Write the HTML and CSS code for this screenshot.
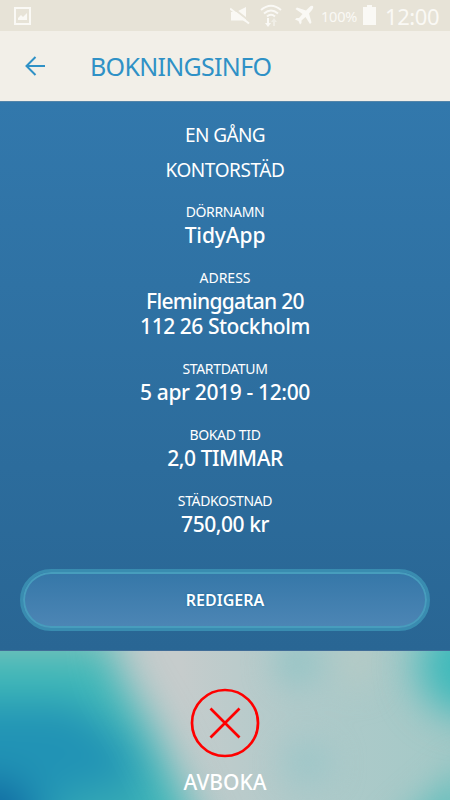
FILE: index.html
```
<!DOCTYPE html>
<html lang="sv">
<head>
<meta charset="utf-8">
<title>Bokningsinfo</title>
<link rel="stylesheet" href="styles.css">
</head>
<body>

<div class="statusbar">
    <svg class="icon-picture" width="18" height="19" viewBox="0 0 18 19">
        <path d="M1 1h15v16H1z" fill="none" stroke="currentColor" stroke-width="2"/>
        <path d="M4 13v-2l3-3 2 2 4-4v7z" fill="currentColor"/>
    </svg>
    <svg class="icon-mute" width="20" height="20" viewBox="0 0 20 20">
        <path d="M1 6h5l10-5v15l-3-1.500H1z" fill="currentColor"/>
        <path d="M1 .5l19 15" stroke="#e7e3d7" stroke-width="2"/>
        <path d="M0 2.500l19 15" stroke="currentColor" stroke-width="2"/>
    </svg>
    <svg class="icon-wifi" width="22" height="23" viewBox="0 0 22 23">
        <g fill="none" stroke="currentColor" stroke-width="2">
            <path d="M1 6q10-8.500 20 0M4 9.500q7-6 14 0M7 12.500q4-3.500 8 0"/>
        </g>
        <path d="M7 14h2v5h2l-3 4-3-4h2z" fill="currentColor"/>
        <path d="M13 22h2v-4h2l-3-4-3 4h2z" fill="currentColor" opacity=".5"/>
    </svg>
    <svg class="icon-plane" width="19" height="20" viewBox="0 0 19 20">
        <path d="M18 1q-1.500-1-3.500 1L11 5.500 2 2.500.5 4l7 5L4 13H1.500L0 14.500l3.500 1.500L5 19.500 6.500 18v-2.500l4-3.500 4.500 7 1.500-1.500-2.500-9L17 5q2-2.500 1-4z" fill="currentColor"/>
    </svg>
    <span class="percent">100%</span>
    <svg class="icon-battery" width="13" height="20" viewBox="0 0 13 20">
        <path d="M4 0h5v2h4v18H0V2h4z" fill="currentColor"/>
    </svg>
    <span class="clock">12:00</span>
</div>

<div class="header">
    <svg class="back" width="20" height="20" viewBox="0 0 20 20">
        <path d="M20 10H2M10.500 1L1.500 10l9 9" fill="none" stroke="currentColor" stroke-width="2"/>
    </svg>
    <h1 class="title">BOKNINGSINFO</h1>
</div>

<div class="panel">
    <div class="service once">EN GÅNG</div>
    <div class="service">KONTORSTÄD</div>

    <div class="info">
        <div class="label">DÖRRNAMN</div>
        <div class="value name">TidyApp</div>
    </div>
    <div class="info">
        <div class="label adress">ADRESS</div>
        <div class="value street">Fleminggatan 20</div>
        <div class="value">112 26 Stockholm</div>
    </div>
    <div class="info">
        <div class="label">STARTDATUM</div>
        <div class="value date">5 apr 2019 - 12:00</div>
    </div>
    <div class="info">
        <div class="label">BOKAD TID</div>
        <div class="value">2,0 TIMMAR</div>
    </div>
    <div class="info">
        <div class="label">STÄDKOSTNAD</div>
        <div class="value">750,00 kr</div>
    </div>

    <button class="edit">REDIGERA</button>
</div>

<div class="footer">
    <svg class="backdrop" width="450" height="149" viewBox="0 0 450 149">
        <defs>
            <linearGradient id="base">
                <stop offset=".4" stop-color="#c6cccc"/>
                <stop offset=".65" stop-color="#b0caca"/>
                <stop offset="1" stop-color="#a4c9c7"/>
            </linearGradient>
            <filter id="soft" x="-50%" y="-50%" width="200%" height="200%" color-interpolation-filters="sRGB">
                <feGaussianBlur stdDeviation="20"/>
            </filter>
            <filter id="faint" x="-50%" y="-50%" width="200%" height="200%" color-interpolation-filters="sRGB">
                <feGaussianBlur stdDeviation="16"/>
            </filter>
        </defs>
        <path d="M0 0h450v149H0z" fill="url(#base)"/>
        <g filter="url(#faint)">
            <ellipse cx="298" cy="12" rx="22" ry="22" fill="#94c4c5"/>
            <ellipse cx="308" cy="112" rx="24" ry="20" fill="#9cc6c8"/>
            <ellipse cx="358" cy="0" rx="16" ry="40" fill="#b6cac5"/>
            <path d="M390 180l80-70v90z" fill="#68bfbd"/>
        </g>
        <g filter="url(#soft)">
            <path d="M-80-80H100L118 20l36 60 66 140H-80z" fill="#3fb8b8"/>
            <path d="M-80-80H125L108 0H-80z" fill="#88c3bb"/>
            <path d="M-80 52L75 52l48 36 20 40-5 90H-80z" fill="#2193b5"/>
            <path d="M50 220l10-75 75-15 30 90z" fill="#36aab5"/>
            <ellipse cx="-8" cy="164" rx="38" ry="34" fill="#0f68a0"/>
            <ellipse cx="470" cy="15" rx="52" ry="50" fill="#3cb9ba"/>
        </g>
    </svg>
    <svg class="cancel-icon" width="70" height="70" viewBox="0 0 70 70">
        <circle cx="35" cy="35" r="33" fill="none" stroke="#f00" stroke-width="2.700"/>
        <path d="M20.500 20.500l29 29M49.500 20.500l-29 29" stroke="#f00" stroke-width="2.700"/>
    </svg>
    <div class="cancel">AVBOKA</div>
</div>

</body>
</html>
```
FILE: styles.css
```
* {
    box-sizing: border-box;
}
body {
    margin: 0;
    width: 450px;
    height: 800px;
    overflow: hidden;
    display: flex;
    flex-direction: column;
    font-family: "Noto Sans", sans-serif;
    color: #fff;
}
.statusbar {
    height: 31px;
    flex: none;
    display: flex;
    align-items: flex-start;
    padding: 5px 0 0 14px;
    background: #e7e3d7;
    color: #faf9f5;
}
.icon-picture {
    margin-top: 2px;
    margin-right: 198px;
}
.icon-mute {
    margin-top: 1px;
    margin-right: 10px;
}
.icon-wifi {
    margin-top: -1px;
    margin-right: 13px;
}
.icon-plane {
    margin-right: 7px;
}
.percent {
    width: 42px;
    font-size: 14.5px;
    line-height: 22px;
    letter-spacing: -0.2px;
}
.icon-battery {
    margin-right: 9px;
}
.clock {
    font-size: 22px;
    line-height: 22px;
    letter-spacing: -0.4px;
    white-space: nowrap;
}
.header {
    height: 70px;
    flex: none;
    display: flex;
    align-items: center;
    padding-left: 25px;
    background: #f2efe8;
    color: #2f91c6;
}
.back {
    margin-right: 45px;
}
.title {
    margin: 0;
    font-size: 25px;
    font-weight: 400;
    line-height: 34px;
    letter-spacing: -0.7px;
}
.panel {
    height: 550px;
    flex: none;
    padding: 16px 20px 0;
    border-top: 1px solid #5485a9;
    border-bottom: 1px solid #416d98;
    background: linear-gradient(#3278ac, #296694);
    text-align: center;
}
.service {
    font-size: 19px;
    line-height: 35px;
    letter-spacing: -0.4px;
}
.once {
    letter-spacing: -0.6px;
}
.info {
    margin-bottom: 20px;
}
.service + .info {
    margin-top: 14px;
}
.label {
    font-size: 14px;
    line-height: 20px;
    letter-spacing: -0.35px;
}
.adress {
    letter-spacing: 0;
}
.value {
    font-size: 21px;
    font-weight: 500;
    line-height: 25px;
    letter-spacing: -0.45px;
}
.label + .value {
    margin-top: 1px;
}
.name {
    letter-spacing: -0.1px;
}
.street {
    letter-spacing: -0.7px;
}
.date {
    letter-spacing: -0.35px;
}
.edit {
    display: block;
    width: 410px;
    height: 62px;
    margin-top: 32px;
    padding: 0;
    border: 3px solid #398cb0;
    border-radius: 31px;
    background: linear-gradient(#3577a8, #4d86b5);
    box-shadow: inset 0 0 0 2px #479dbd;
    color: #fff;
    font-family: inherit;
    font-size: 16px;
    font-weight: 600;
    text-shadow: 0 0 2px #0a6198;
}
.footer {
    position: relative;
    flex: 1;
    display: flex;
    flex-direction: column;
    align-items: center;
    padding-top: 37px;
}
.backdrop {
    position: absolute;
    top: 0;
    left: 0;
    z-index: -1;
}
.cancel-icon {
    flex: none;
}
.cancel {
    margin-top: 10px;
    font-size: 21px;
    font-weight: 500;
    line-height: 28px;
}
```
